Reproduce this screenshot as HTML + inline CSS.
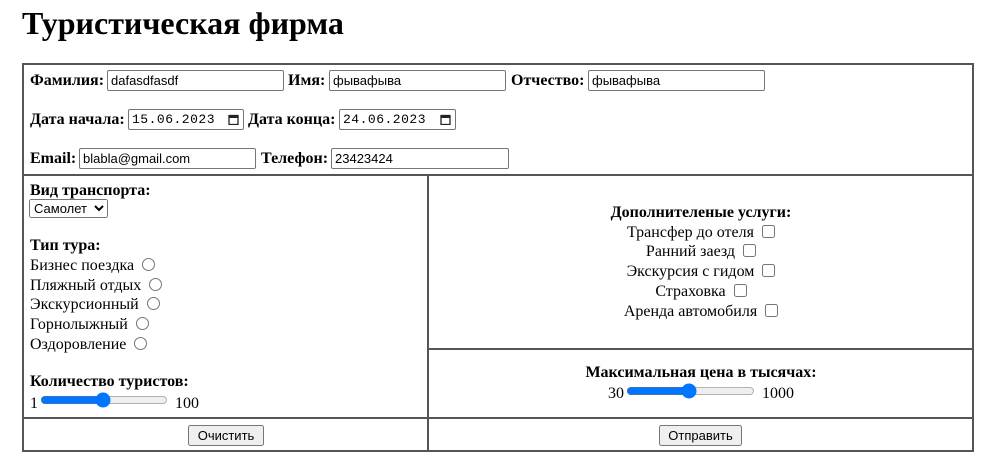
<!DOCTYPE html>
<html><head><meta charset="utf-8"><style>
body{margin:0;width:997px;height:475px;position:relative;font-family:"Liberation Serif",serif;font-size:16px;color:#000;background:#fff;overflow:hidden}
.a{position:absolute;line-height:18px;white-space:nowrap}
.l{position:absolute;background:#555}
h1{position:absolute;left:22px;top:5px;margin:0;font-size:32px;line-height:37px}
input[type=text]{position:absolute;box-sizing:border-box;height:21px;font-family:"Liberation Sans",sans-serif;font-size:13px;border:1px solid #767676;border-radius:2px;padding:1px 3px;margin:0}
.d{font-family:"Liberation Mono",monospace!important;letter-spacing:0.5px}
.ic{position:absolute;width:11px;height:11px}
.c{text-align:center;left:430px;width:542px}
input[type=checkbox],input[type=radio]{width:13px;height:13px;margin:0 0 0 4px;vertical-align:-1px}
input[type=range]{position:absolute;margin:0;height:16px}
button{position:absolute;font-family:"Liberation Sans",sans-serif;font-size:13px;height:21px;padding:1px 6px;margin:0}
select{position:absolute;font-family:"Liberation Sans",sans-serif;font-size:13px;height:19px;margin:0}
</style></head><body>
<h1>Туристическая фирма</h1>
<div class="l" style="left:22px;top:63px;width:952px;height:2px"></div>
<div class="l" style="left:22px;top:450px;width:952px;height:2px"></div>
<div class="l" style="left:22px;top:63px;width:2px;height:389px"></div>
<div class="l" style="left:972px;top:63px;width:2px;height:389px"></div>
<div class="l" style="left:22px;top:174px;width:952px;height:2px"></div>
<div class="l" style="left:22px;top:417px;width:952px;height:2px"></div>
<div class="l" style="left:427px;top:174px;width:2px;height:278px"></div>
<div class="l" style="left:427px;top:348px;width:547px;height:2px"></div>

<div class="a" style="left:30px;top:72px"><b>Фамилия:</b></div>
<input type="text" value="dafasdfasdf" style="left:107px;top:70px;width:177px">
<div class="a" style="left:288px;top:72px"><b>Имя:</b></div>
<input type="text" value="фывафыва" style="left:329px;top:70px;width:177px">
<div class="a" style="left:511px;top:72px"><b>Отчество:</b></div>
<input type="text" value="фывафыва" style="left:588px;top:70px;width:177px">

<div class="a" style="left:30px;top:111px"><b>Дата начала:</b></div>
<input type="text" class="d" value="15.06.2023" style="left:128px;top:109px;width:116px">
<svg class="ic" style="left:228px;top:114px" viewBox="0 0 11 11"><rect x="1" y="1.5" width="9" height="9" fill="none" stroke="#222" stroke-width="1.3"/><rect x="1" y="1.5" width="9" height="2.5" fill="#222"/></svg>
<div class="a" style="left:248px;top:111px"><b>Дата конца:</b></div>
<input type="text" class="d" value="24.06.2023" style="left:339px;top:109px;width:117px">
<svg class="ic" style="left:440px;top:114px" viewBox="0 0 11 11"><rect x="1" y="1.5" width="9" height="9" fill="none" stroke="#222" stroke-width="1.3"/><rect x="1" y="1.5" width="9" height="2.5" fill="#222"/></svg>

<div class="a" style="left:30px;top:150px"><b>Email:</b></div>
<input type="text" value="blabla@gmail.com" style="left:79px;top:148px;width:177px">
<div class="a" style="left:261px;top:150px"><b>Телефон:</b></div>
<input type="text" value="23423424" style="left:331px;top:148px;width:178px">

<div class="a" style="left:30px;top:182px"><b>Вид транспорта:</b></div>
<select style="left:29px;top:199px;width:79px"><option>Самолет</option></select>
<div class="a" style="left:30px;top:237px"><b>Тип тура:</b></div>
<div class="a" style="left:30px;top:257px">Бизнес поездка <input type="radio"></div>
<div class="a" style="left:30px;top:277px">Пляжный отдых <input type="radio"></div>
<div class="a" style="left:30px;top:296px">Экскурсионный <input type="radio"></div>
<div class="a" style="left:30px;top:316px">Горнолыжный <input type="radio"></div>
<div class="a" style="left:30px;top:336px">Оздоровление <input type="radio"></div>
<div class="a" style="left:30px;top:373px"><b>Количество туристов:</b></div>
<div class="a" style="left:30px;top:395px">1</div>
<input type="range" min="1" max="100" value="50" style="left:40px;top:392px;width:128px">
<div class="a" style="left:175px;top:395px">100</div>
<button style="left:188px;top:425px;width:76px">Очистить</button>

<div class="a c" style="top:204px"><b>Дополнителеные услуги:</b></div>
<div class="a c" style="top:224px">Трансфер до отеля <input type="checkbox"></div>
<div class="a c" style="top:243px">Ранний заезд <input type="checkbox"></div>
<div class="a c" style="top:263px">Экскурсия с гидом <input type="checkbox"></div>
<div class="a c" style="top:283px">Страховка <input type="checkbox"></div>
<div class="a c" style="top:303px">Аренда автомобиля <input type="checkbox"></div>
<div class="a c" style="top:364px"><b>Максимальная цена в тысячах:</b></div>
<div class="a" style="left:608px;top:385px">30</div>
<input type="range" min="30" max="1000" value="500" style="left:626px;top:383px;width:129px">
<div class="a" style="left:762px;top:385px">1000</div>
<button style="left:659px;top:425px;width:83px">Отправить</button>
</body></html>
